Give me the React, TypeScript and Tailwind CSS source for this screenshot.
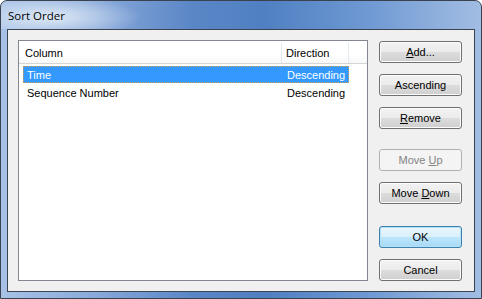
import type { ReactNode } from "react";

type BtnProps = {
  children: ReactNode;
  variant?: "normal" | "default" | "disabled";
  className?: string;
};

function DlgButton({ children, variant = "normal", className = "" }: BtnProps) {
  const look =
    variant === "default"
      ? "border-[#3c7fb1] bg-[linear-gradient(#eaf6fd_0%,#d9f0fc_50%,#bee6fd_50%,#a7d9f5_100%)] text-black shadow-[inset_0_0_0_1px_#b7e1f7]"
      : variant === "disabled"
        ? "border-[#adb2b5] bg-[#f4f4f4] text-[#838383]"
        : "border-[#707070] bg-[linear-gradient(#f2f2f2_0%,#ebebeb_50%,#dddddd_50%,#cfcfcf_100%)] text-black shadow-[inset_0_0_0_1px_#fcfcfc]";
  return (
    <div
      className={`flex h-[22px] w-[83px] items-center justify-center rounded-[3px] border pt-[1px] text-[11px] ${look} ${className}`}
    >
      {children}
    </div>
  );
}

export default function App() {
  return (
    <div
      className="flex h-[299px] w-[482px] flex-col overflow-hidden rounded-t-[7px] border border-[#3a4250] bg-[linear-gradient(90deg,#a8c2e6_0%,#88a9da_20%,#5a86c6_40%,#5080c2_55%,#6c97d2_75%,#a2bde3_100%)]"
      style={{ fontFamily: '"Liberation Sans", Arial, sans-serif' }}
    >
      <div className="flex h-[28px] shrink-0 items-center bg-[radial-gradient(ellipse_90px_22px_at_50px_16px,rgba(235,242,250,0.85),rgba(235,242,250,0)_100%)] pl-[7px] pt-[1px]">
        <span
          className="text-[11.5px] text-black"
          style={{ fontFamily: '"Open Sans", "Noto Sans", sans-serif' }}
        >
          Sort Order
        </span>
      </div>

      <div className="mx-[6px] mb-[6px] flex h-[263px] border border-[#3c4452] bg-[#f0f0f0] pl-[10px] pt-[10px]">
        <div className="flex h-[241px] w-[350px] flex-col border border-[#828790] bg-white">
          <div className="flex h-[23px] shrink-0 border-b border-[#d5d5d5] bg-[linear-gradient(#ffffff_0%,#ffffff_60%,#f6f7f8_100%)] pt-[2px] text-[11px] text-black">
            <div className="flex w-[263px] items-center border-r border-[#e3e8ee] pl-[6px]">
              Column
            </div>
            <div className="flex w-[67px] items-center border-r border-[#e3e8ee] pl-[4px]">
              Direction
            </div>
            <div className="flex-1" />
          </div>
          <div className="mt-[2px] flex flex-col pl-[4px] text-[11px]">
            <div className="flex h-[17px] w-[326px] items-center border border-dotted border-[#d59f4d] bg-[#3399ff] pt-[1px] text-white">
              <span className="w-[259px] pl-[3px]">Time</span>
              <span className="pl-[4px]">Descending</span>
            </div>
            <div className="flex h-[18px] w-[326px] items-center border border-transparent pt-[2px] text-black">
              <span className="w-[259px] pl-[3px]">Sequence Number</span>
              <span className="pl-[4px]">Descending</span>
            </div>
          </div>
        </div>

        <div className="ml-[11px] flex flex-col pt-[1px]">
          <DlgButton>
            <span>
              <span className="underline">A</span>dd...
            </span>
          </DlgButton>
          <DlgButton className="mt-[11px]">Ascending</DlgButton>
          <DlgButton className="mt-[11px]">
            <span>
              <span className="underline">R</span>emove
            </span>
          </DlgButton>
          <DlgButton variant="disabled" className="mt-[20px]">
            <span>
              Move <span className="underline">U</span>p
            </span>
          </DlgButton>
          <DlgButton className="mt-[11px]">
            <span>
              Move <span className="underline">D</span>own
            </span>
          </DlgButton>
          <DlgButton variant="default" className="mt-[22px]">
            OK
          </DlgButton>
          <DlgButton className="mt-[11px]">Cancel</DlgButton>
        </div>
      </div>
    </div>
  );
}
